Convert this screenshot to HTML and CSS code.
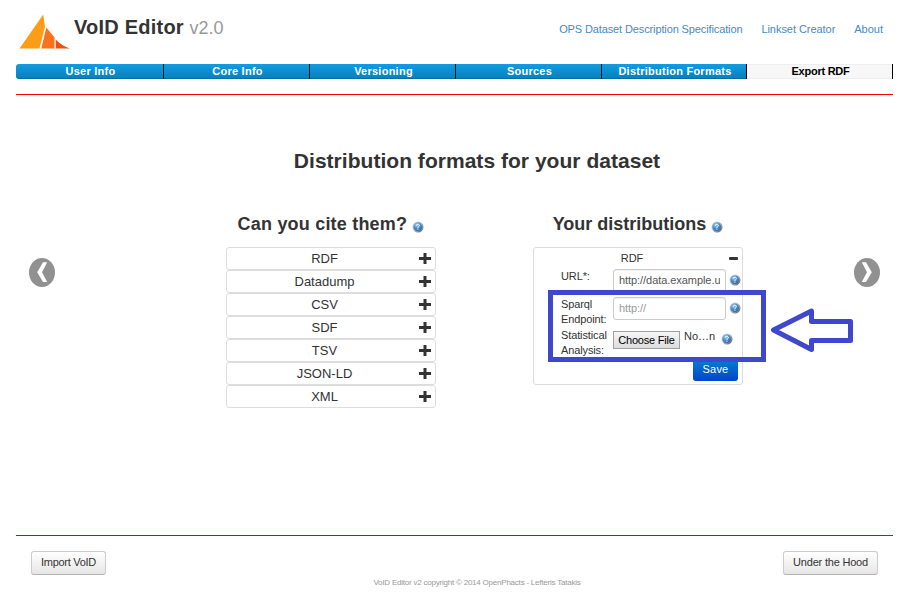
FILE: index.html
```html
<!DOCTYPE html>
<html lang="en">
<head>
<meta charset="utf-8">
<title>VoID Editor</title>
<link rel="stylesheet" href="styles.css">
</head>
<body>
<svg width="0" height="0" class="defs" aria-hidden="true">
  <defs>
    <radialGradient id="ball" cx="40%" cy="30%" r="70%"><stop offset="0" stop-color="#9ccdf4"/><stop offset=".55" stop-color="#4a90d2"/><stop offset="1" stop-color="#2c68ae"/></radialGradient>
    <linearGradient id="rim" x1="0" y1="0" x2="1" y2="1"><stop offset="0" stop-color="#e4e4e4"/><stop offset=".5" stop-color="#b4b4b4"/><stop offset="1" stop-color="#555"/></linearGradient>
    <symbol id="help" viewBox="0 0 12 12">
      <circle cx="6" cy="6" r="5.5" fill="url(#rim)"/>
      <circle cx="5.7" cy="5.7" r="4.3" fill="url(#ball)"/>
      <path d="M4.2 4.6C4.2 2.9 7.4 2.9 7.4 4.5C7.4 5.6 5.9 5.4 5.9 6.8M5.9 7.7V8.8" fill="none" stroke="#fff" stroke-width="1"/>
    </symbol>
    <symbol id="plus" viewBox="0 0 12 12"><path d="M4.5 0h3v4h4.5v3h-4.5v4h-3v-4h-4.500v-3h4.500z" fill="#333"/></symbol>
  </defs>
</svg>
<div class="page">
  <header class="header">
    <svg class="logo" viewBox="0 0 52 36" width="52" height="36">
      <path d="M24.2 .5L26 12.5L20.5 34.5H.5z" fill="#ff9e16"/>
      <path d="M27.3 13.5L35.5 23.5V34.5H22.3z" fill="#fb721b"/>
      <path d="M36.8 25.5Q42 31.5 51 34.5H36.8z" fill="#f04e0e"/>
    </svg>
    <h1 class="brand">VoID Editor <small>v2.0</small></h1>
    <nav class="links"><a class="spec">OPS Dataset Description Specification</a><a class="linkset">Linkset Creator</a><a>About</a></nav>
  </header>
  <nav class="tabs">
    <a>User Info</a><a>Core Info</a><a>Versioning</a><a>Sources</a><a>Distribution Formats</a><a class="active">Export RDF</a>
  </nav>
  <hr class="rule">
  <main class="main">
    <svg class="arrow" viewBox="0 0 26 29" width="26" height="29"><ellipse cx="13" cy="14.5" rx="13" ry="14.5" fill="#919191"/><path d="M14 4.3h4.2l-5.2 9.9l5.2 9.9H14L8.2 14.2z" fill="#fff"/></svg>
    <section class="content">
      <h2 class="title">Distribution formats for your dataset</h2>
      <div class="columns">
        <div class="column">
          <h3 class="cite">Can you cite them? <svg class="help"><use href="#help"/></svg></h3>
          <ul class="formats">
            <li><span>RDF</span><svg><use href="#plus"/></svg></li>
            <li><span>Datadump</span><svg><use href="#plus"/></svg></li>
            <li><span>CSV</span><svg><use href="#plus"/></svg></li>
            <li><span>SDF</span><svg><use href="#plus"/></svg></li>
            <li><span>TSV</span><svg><use href="#plus"/></svg></li>
            <li><span>JSON-LD</span><svg><use href="#plus"/></svg></li>
            <li><span>XML</span><svg><use href="#plus"/></svg></li>
          </ul>
        </div>
        <div class="column">
          <h3>Your distributions <svg class="help"><use href="#help"/></svg></h3>
          <div class="panel">
            <div class="panel-head"><span>RDF</span><i class="minus"></i></div>
            <div class="row url"><label>URL*:</label><div class="input"><span>http://data.example.uk</span></div><svg class="help"><use href="#help"/></svg></div>
            <div class="row"><label>Sparql<br>Endpoint:</label><div class="input placeholder"><span>http://</span></div><svg class="help"><use href="#help"/></svg></div>
            <div class="row file"><label>Statistical<br>Analysis:</label><button class="choose">Choose File</button><span class="filename">No…n</span><svg class="help"><use href="#help"/></svg></div>
            <button class="save">Save</button>
            <svg class="callout" viewBox="0 0 308 76" width="308" height="76">
              <rect x="2.5" y="2.5" width="213" height="67" fill="none" stroke="#3f48cc" stroke-width="5"/>
              <path d="M225.5 40L263.5 21V31.5H302.5V50.5H263.5V59.5z" fill="#fff" stroke="#3f48cc" stroke-width="5" stroke-linejoin="round"/>
            </svg>
          </div>
        </div>
      </div>
    </section>
    <svg class="arrow" viewBox="0 0 26 29" width="26" height="29"><ellipse cx="13" cy="14.5" rx="13" ry="14.5" fill="#919191"/><path d="M12 4.3H7.8l5.2 9.9l-5.2 9.9H12l5.8-9.9z" fill="#fff"/></svg>
  </main>
  <footer class="footer">
    <button class="btn import">Import VoID</button>
    <p>VoID Editor v2 copyright © 2014 OpenPhacts - Lefteris Tatakis</p>
    <button class="btn hood">Under the Hood</button>
  </footer>
</div>
</body>
</html>
```
FILE: styles.css
```css
* { box-sizing: border-box; }
body { margin: 0; background: #fff; color: #333; font: 11px/15px "Liberation Sans", Arial, sans-serif; }
.defs { display: block; }
h1, h2, h3, p, ul { margin: 0; padding: 0; }
button { font: inherit; color: inherit; padding: 0; }
.page { width: 877px; height: 607px; margin: 0 auto 0 16px; }
.header { display: flex; height: 64px; padding: 14px 10px 0 3px; }
.logo { flex: none; }
.brand { margin-left: 3px; font-size: 20px; line-height: 26px; letter-spacing: .22px; white-space: nowrap; }
.brand small { font-size: 18px; font-weight: normal; color: #999; letter-spacing: 0; }
.links { display: flex; gap: 19px; margin-left: auto; padding-top: 8px; color: #428bca; white-space: nowrap; }
.spec { letter-spacing: -.12px; }
.linkset { letter-spacing: -.05px; }
.tabs { display: grid; grid-template-columns: 148px 146px 146px 146px 145px 146px; height: 15px; }
.tabs a { height: 15px; border-right: 1px solid #000; background: linear-gradient(#149bdf, #0480be); box-shadow: inset 0 -1px rgba(0,0,0,.15); color: #fff; font-weight: bold; line-height: 15px; text-align: center; letter-spacing: .25px; padding-left: 2px; }
.tabs a:first-child { border-radius: 3px 0 0 3px; }
.tabs a.active { background: #f7f7f7; box-shadow: inset 0 1px #eee, inset 0 -1px #eee; color: #000; letter-spacing: -.25px; }
.rule { height: 1px; margin: 15px 0 0; border: 0; background: #f00; }
.main { display: flex; height: 440px; padding: 0 13px; }
.arrow { flex: none; margin-top: 163px; }
.content { width: 517px; margin: 0 auto 0 171px; padding-top: 53px; }
.title { font-size: 21px; line-height: 26px; text-align: center; padding-right: 15px; letter-spacing: .03px; }
.columns { display: flex; justify-content: space-between; margin-top: 38px; }
.column { width: 210px; }
h3 { height: 35px; font-size: 18px; line-height: 24px; text-align: center; white-space: nowrap; }
.cite { letter-spacing: .2px; }
.help { width: 12px; height: 12px; }
h3 .help { vertical-align: -3px; }
.formats { list-style: none; }
.formats li { display: flex; align-items: center; height: 23px; padding-right: 4px; border: 1px solid #ddd; border-radius: 3px; font-size: 13px; }
.formats span { flex: 1; text-align: center; padding-left: 3px; }
.formats svg { width: 12px; height: 12px; }
.panel { position: relative; height: 138px; padding-left: 27px; border: 1px solid #ddd; border-radius: 3px; }
.panel-head { display: flex; align-items: center; height: 21px; padding-right: 4px; }
.panel-head span { flex: 1; text-align: center; padding-right: 26px; }
.minus { width: 9px; height: 3px; background: #333; border-radius: 1px; }
.row { display: flex; height: 31px; align-items: flex-start; }
.row.url { height: 28px; }
.row label { width: 52px; flex: none; letter-spacing: -.12px; }
.input { width: 113px; height: 23px; padding: 3px 5px; border: 1px solid #ccc; border-radius: 3px; box-shadow: inset 0 1px 1px rgba(0,0,0,.06); color: #555; letter-spacing: -.06px; }
.input span { display: block; overflow: hidden; white-space: nowrap; }
.input.placeholder { color: #999; }
.row .help { margin: 5px 0 0 3px; flex: none; }
.choose { width: 67px; height: 18px; margin-top: 3px; border: 1px solid #a0a0a0; background: linear-gradient(#f6f6f6, #ddd); color: #000; line-height: 16px; letter-spacing: -.2px; white-space: nowrap; }
.filename { width: 36px; padding: 1px 0 0 4px; }
.row.file .help { margin-left: 5px; }
.save { display: block; width: 45px; height: 24px; margin: -2px 4px 0 auto; border: 0; border-radius: 3px; background: linear-gradient(#08c, #04c); color: #fff; letter-spacing: .2px; }
.callout { position: absolute; left: 14px; top: 42px; }
.footer { display: grid; grid-template-columns: 75px 1fr 95px; height: 72px; padding: 15px 15px 0; border-top: 1px solid #e80000; }
.btn { height: 24px; padding-bottom: 2px; border: 1px solid #ccc; border-bottom-color: #b3b3b3; border-radius: 3px; background: linear-gradient(#fff, #e6e6e6); white-space: nowrap; }
.import { letter-spacing: -.3px; }
.hood { letter-spacing: -.2px; }
.footer p { padding: 24px 0 0 65px; font-size: 8px; line-height: 15px; color: #999; text-align: center; letter-spacing: -.22px; }
```
